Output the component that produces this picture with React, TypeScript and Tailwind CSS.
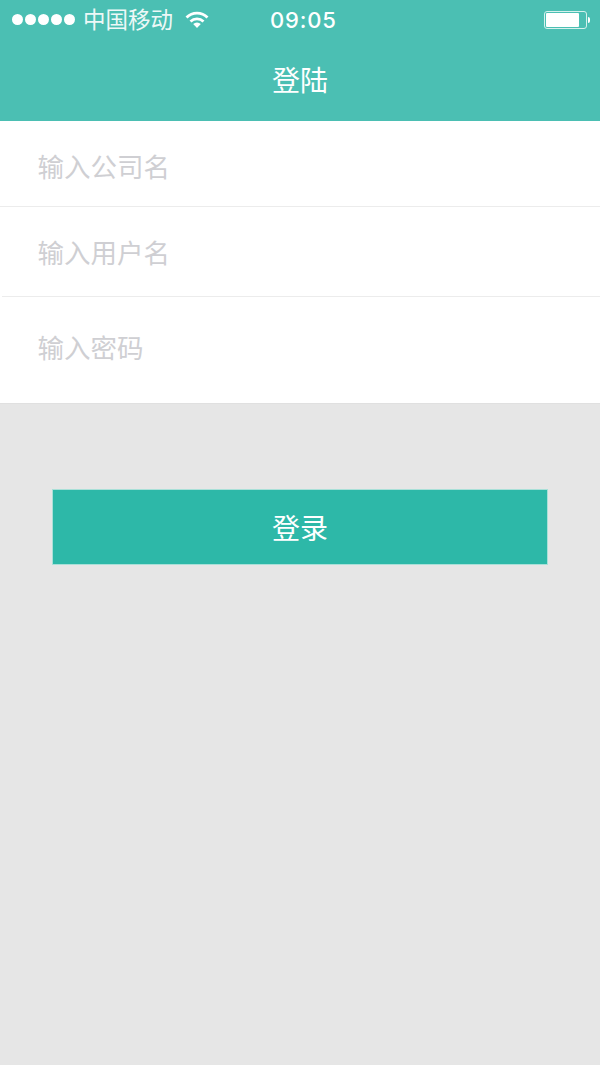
const fontStack = { fontFamily: '"Noto Sans CJK SC", "Liberation Sans", sans-serif' };

function Wifi() {
  return (
    <svg viewBox="0 0 24 18" className="h-[18px] w-[24px]" fill="none" stroke="white" strokeWidth="2.8">
      <path d="M1.5 6.5a15 15 0 0 1 21 0" />
      <path d="M5.5 10.5a9.5 9.5 0 0 1 13 0" />
      <path d="M12 17l-3.8-3.9a5.2 5.2 0 0 1 7.6 0z" fill="white" stroke="none" />
    </svg>
  );
}

function Battery() {
  return (
    <div className="flex items-center">
      <div className="h-[18px] w-[43px] rounded-[3px] border border-[#d5f1ed] py-[1px] pl-[1px]">
        <div className="h-full w-[33px] rounded-[1px] bg-white" />
      </div>
      <div className="ml-[1px] h-[6px] w-[2px] rounded-r-full bg-white" />
    </div>
  );
}

function StatusBar() {
  return (
    <div className="flex h-[40px] items-center pb-[1px] pl-[12px] pr-[10px] text-white">
      <div className="flex w-[64px] gap-[2px]">
        {[0, 1, 2, 3, 4].map((i) => (
          <span key={i} className="h-[11px] w-[11px] rounded-full bg-white" />
        ))}
      </div>
      <span className="ml-[7px] mb-[3px] w-[102px] text-[22.5px] leading-none opacity-90">中国移动</span>
      <Wifi />
      <span className="ml-[61px] text-[22px] font-medium leading-none tracking-[0.8px]" style={{ fontFamily: 'Inter, sans-serif' }}>
        09:05
      </span>
      <div className="ml-auto">
        <Battery />
      </div>
    </div>
  );
}

function Field({ label, className }: { label: string; className: string }) {
  return (
    <div className={`flex items-center pl-[37.5px] text-[26.5px] leading-none text-[#cfcfd3] ${className}`}>
      {label}
    </div>
  );
}

export default function App() {
  return (
    <div className="flex min-h-[1065px] flex-col bg-[#e6e6e6]" style={fontStack}>
      <header className="h-[121px] bg-[#4bbfb3]">
        <StatusBar />
        <div className="flex h-[81px] items-start justify-center pt-[21px] text-[28px] leading-[36px] text-white">登陆</div>
      </header>

      <div className="bg-white">
        <Field label="输入公司名" className="h-[86px] border-b border-[#ececec] pt-[6px]" />
        <div className="h-[90px]">
          <Field label="输入用户名" className="h-[89px] pt-[2px]" />
          <div className="ml-[2px] h-[1px] bg-[#ececec]" />
        </div>
        <Field label="输入密码" className="h-[107px] border-b border-[#e0e0e0] pb-[5px]" />
      </div>

      <button className="mx-[52px] mt-[85px] flex h-[76px] items-center justify-center border border-[#a9e0d8] bg-[#2db8a8] text-[28px] text-white">
        登录
      </button>
    </div>
  );
}
